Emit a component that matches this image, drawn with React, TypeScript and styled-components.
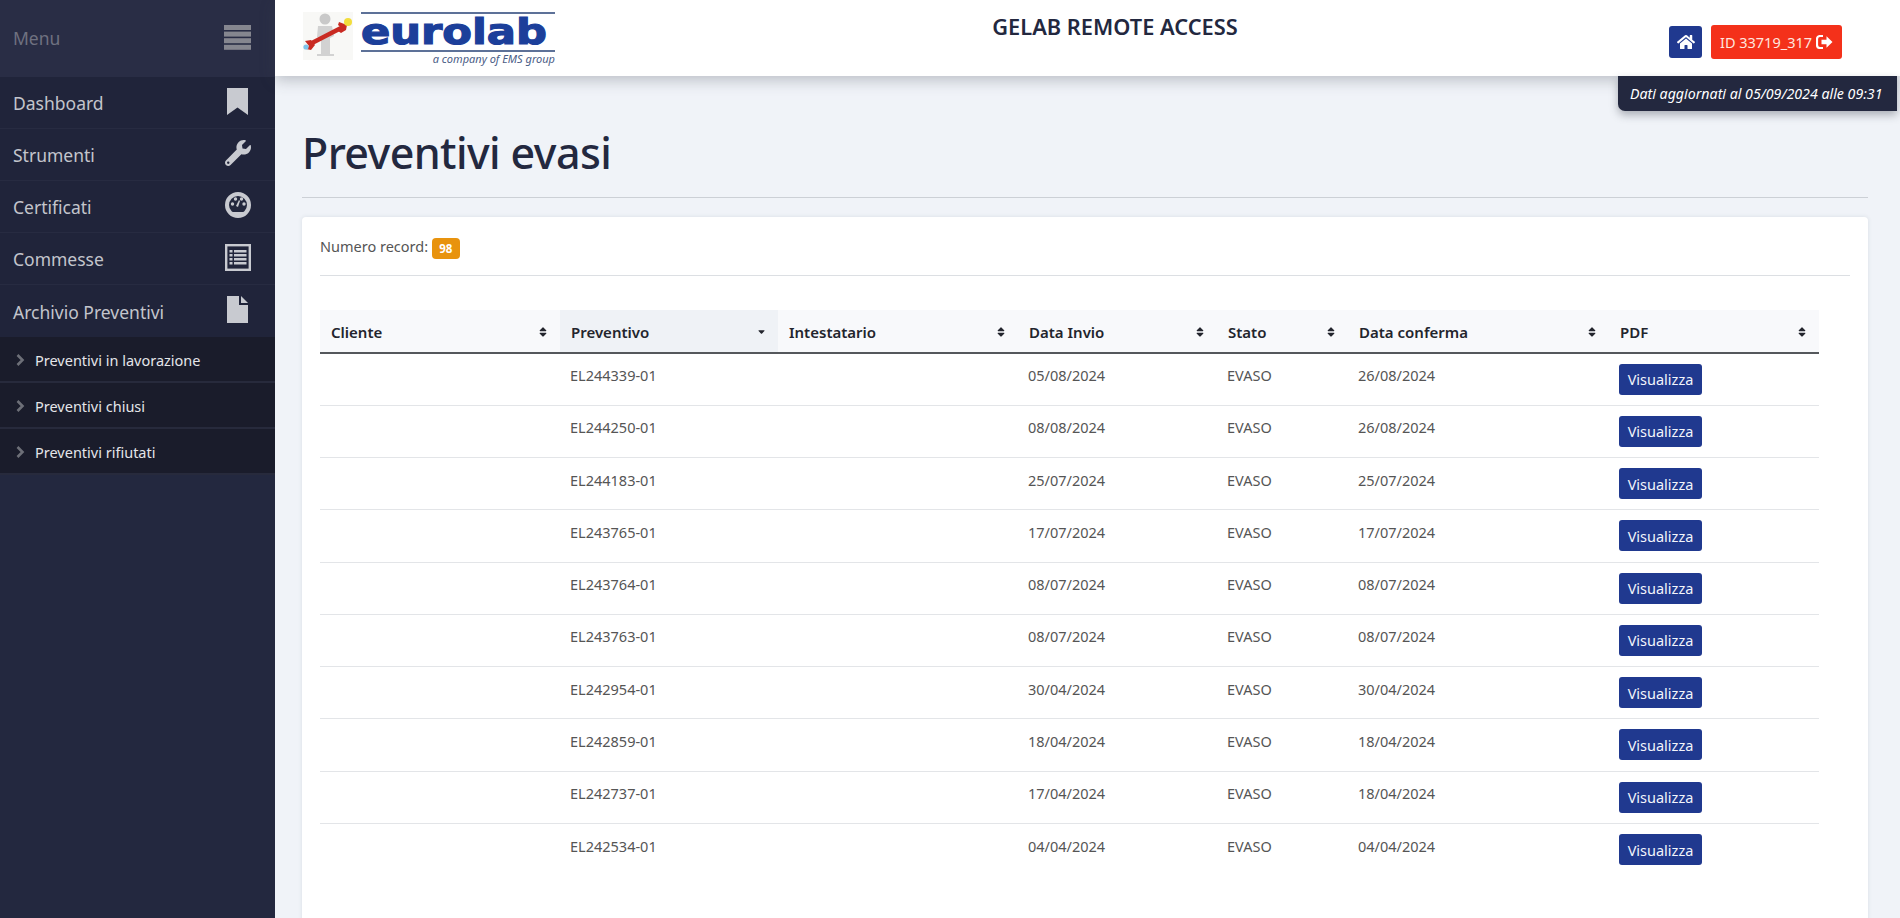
import styled, { createGlobalStyle } from "styled-components";
import { FaWrench, FaHome, FaSortDown, FaSort } from "react-icons/fa";

const GlobalStyle = createGlobalStyle`
  html, body {
    margin: 0;
    height: 100%;
    overflow: hidden;
    background: #f0f3f8;
    font-family: "Noto Sans", "Open Sans", sans-serif;
  }
  * { box-sizing: border-box; }
`;

const MenuIcon = () => (
  <svg width="27" height="25" viewBox="0 0 27 25" fill="#85868f">
    <rect y="0" width="27" height="5" />
    <rect y="6.6" width="27" height="5" />
    <rect y="13.2" width="27" height="5" />
    <rect y="19.8" width="27" height="5" />
  </svg>
);

const BookmarkIcon = () => (
  <svg width="21" height="27" viewBox="0 0 21 27" fill="#c8cad0">
    <path d="M0 0h21v27l-10.5-7.5L0 27z" />
  </svg>
);

const GaugeIcon = () => (
  <svg width="26" height="26" viewBox="0 0 26 26">
    <circle cx="13" cy="13" r="11" fill="#22273d" stroke="#c8cad0" strokeWidth="4" />
    <circle cx="7.5" cy="12" r="1.7" fill="#c8cad0" />
    <circle cx="10.5" cy="7" r="1.7" fill="#c8cad0" />
    <circle cx="16.5" cy="7" r="1.7" fill="#c8cad0" />
    <circle cx="19" cy="12" r="1.7" fill="#c8cad0" />
    <path d="M11 14l3-6 1 1-2 6z" fill="#c8cad0" />
    <path d="M6 20h14v3H6z" fill="#c8cad0" />
  </svg>
);

const ListIcon = () => (
  <svg width="26" height="27" viewBox="0 0 26 27">
    <rect x="1.2" y="1.2" width="23.6" height="24.6" fill="none" stroke="#c8cad0" strokeWidth="2.4" />
    <path d="M4.5 6h3v2.5h-3zM4.5 10h3v2.5h-3zM4.5 14h3v2.5h-3zM4.5 18h3v2.5h-3z" fill="#c8cad0" />
    <path d="M9 6h12.5v2.5H9zM9 10h12.5v2.5H9zM9 14h12.5v2.5H9zM9 18h12.5v2.5H9z" fill="#c8cad0" />
  </svg>
);

const FileIcon = () => (
  <svg width="21" height="27" viewBox="0 0 21 27" fill="#c8cad0">
    <path d="M0 0h12v9h9v18H0z" />
    <path d="M14 0l7 7h-7z" />
  </svg>
);

const ChevronIcon = () => (
  <svg width="9" height="12" viewBox="0 0 9 12">
    <path d="M1.5 1l5 5-5 5" fill="none" stroke="#6d6f78" strokeWidth="2.6" />
  </svg>
);

const LogoutIcon = () => (
  <svg width="17" height="14" viewBox="0 0 17 14">
    <path d="M7 1H4a3 3 0 0 0-3 3v6a3 3 0 0 0 3 3h3" fill="none" stroke="#fff" strokeWidth="2.2" />
    <path d="M5.5 4.8h5V1.2l6 5.8-6 5.8V9.2h-5z" fill="#fff" />
  </svg>
);

const LogoFigure = () => (
  <svg width="50" height="48" viewBox="0 0 50 48">
    <rect width="50" height="48" fill="#f8f8f6" />
    <circle cx="22" cy="7" r="5.5" fill="#c9c9c9" />
    <path d="M15 14h14l2 10-4 2v16h4v2H14v-2h4V27l-4-2z" fill="#d2d2d2" />
    <path d="M7 32L40 15" stroke="#c92a22" strokeWidth="4.5" />
    <path d="M36 10l8 3-1 5-5 3-3-2 4-3-4-3zM2 29l6-1 4 5-4 5-5-1 3-3z" fill="#c92a22" />
    <circle cx="45" cy="10" r="4" fill="#f2dd3c" />
    <circle cx="3" cy="35" r="2.6" fill="#7fc3ea" />
  </svg>
);

const rows = [
  ["EL244339-01", "05/08/2024", "26/08/2024"],
  ["EL244250-01", "08/08/2024", "26/08/2024"],
  ["EL244183-01", "25/07/2024", "25/07/2024"],
  ["EL243765-01", "17/07/2024", "17/07/2024"],
  ["EL243764-01", "08/07/2024", "08/07/2024"],
  ["EL243763-01", "08/07/2024", "08/07/2024"],
  ["EL242954-01", "30/04/2024", "30/04/2024"],
  ["EL242859-01", "18/04/2024", "18/04/2024"],
  ["EL242737-01", "17/04/2024", "18/04/2024"],
  ["EL242534-01", "04/04/2024", "04/04/2024"],
];

const columns = [
  { label: "Cliente", width: 240 },
  { label: "Preventivo", width: 218, active: true },
  { label: "Intestatario", width: 240 },
  { label: "Data Invio", width: 199 },
  { label: "Stato", width: 131 },
  { label: "Data conferma", width: 261 },
  { label: "PDF", width: 210 },
];

const App = () => {
  return (
    <Page>
      <GlobalStyle />
      <Sidebar>
        <MenuHead>
          <span>Menu</span>
          <MenuIcon />
        </MenuHead>
        <NavItem>
          Dashboard
          <NavIcon><BookmarkIcon /></NavIcon>
        </NavItem>
        <NavItem>
          Strumenti
          <NavIcon><FaWrench size={26} /></NavIcon>
        </NavItem>
        <NavItem>
          Certificati
          <NavIcon><GaugeIcon /></NavIcon>
        </NavItem>
        <NavItem>
          Commesse
          <NavIcon><ListIcon /></NavIcon>
        </NavItem>
        <NavItem $last>
          Archivio Preventivi
          <NavIcon><FileIcon /></NavIcon>
        </NavItem>
        {["Preventivi in lavorazione", "Preventivi chiusi", "Preventivi rifiutati"].map((t) => (
          <SubItem key={t}>
            <ChevronIcon />
            {t}
          </SubItem>
        ))}
      </Sidebar>

      <Main>
        <Header>
          <Logo>
            <LogoFigure />
            <LogoText>
              <LogoName><LogoWord>eurolab</LogoWord></LogoName>
              <LogoTag>a company of EMS group</LogoTag>
            </LogoText>
          </Logo>
          <HeaderTitle>GELAB REMOTE ACCESS</HeaderTitle>
          <HeaderButtons>
            <HomeButton><FaHome size={18} color="#fff" /></HomeButton>
            <IdButton>ID 33719_317 <LogoutIcon /></IdButton>
          </HeaderButtons>
          <UpdatedNote>Dati aggiornati al 05/09/2024 alle 09:31</UpdatedNote>
        </Header>

        <Content>
          <Title>Preventivi evasi</Title>
          <Card>
            <RecordLine>
              Numero record: <Badge>98</Badge>
            </RecordLine>
            <Table>
              <thead>
                <tr>
                  {columns.map((c) => (
                    <HeadCell key={c.label} $active={c.active} style={{ width: c.width }}>
                      <HeadInner>
                        {c.label}
                        {c.active ? (
                          <ActiveSort><FaSortDown size={11} /></ActiveSort>
                        ) : (
                          <FaSort size={12} />
                        )}
                      </HeadInner>
                    </HeadCell>
                  ))}
                </tr>
              </thead>
              <tbody>
                {rows.map((r) => (
                  <tr key={r[0]}>
                    <Cell />
                    <Cell>{r[0]}</Cell>
                    <Cell />
                    <Cell>{r[1]}</Cell>
                    <Cell>EVASO</Cell>
                    <Cell>{r[2]}</Cell>
                    <ButtonCell>
                      <ViewButton>Visualizza</ViewButton>
                    </ButtonCell>
                  </tr>
                ))}
              </tbody>
            </Table>
          </Card>
        </Content>
      </Main>
    </Page>
  );
};

export default App;

const Page = styled.div`
  display: flex;
  width: 1900px;
  height: 918px;
  overflow: hidden;
`;

const Sidebar = styled.aside`
  width: 275px;
  flex-shrink: 0;
  background: #23283f;
`;

const MenuHead = styled.div`
  height: 77px;
  padding: 0 24px 2px 13px;
  display: flex;
  align-items: center;
  justify-content: space-between;
  font-size: 17.5px;
  color: #6f7180;
  background: #292d45;
`;

const NavItem = styled.div<{ $last?: boolean }>`
  height: 52px;
  padding: 1px 24px 0 13px;
  display: flex;
  align-items: center;
  justify-content: space-between;
  font-size: 17.5px;
  color: #c3c5cc;
  background: #20243a;
  border-bottom: ${(p) => (p.$last ? "0" : "1px solid #272b41")};
`;

const NavIcon = styled.span`
  width: 27px;
  display: flex;
  justify-content: center;
  margin-top: -4px;
  color: #c8cad0;
`;

const SubItem = styled.div`
  height: 46px;
  padding: 2px 0 0 16px;
  display: flex;
  align-items: center;
  gap: 10px;
  font-size: 14.5px;
  color: #e4e5e9;
  background: #1a1c2b;
  border-bottom: 2px solid #272a3c;
`;

const Main = styled.div`
  flex: 1;
  min-width: 0;
`;

const Header = styled.header`
  position: relative;
  height: 76px;
  padding: 12px 58px 0 28px;
  display: flex;
  align-items: flex-start;
  justify-content: space-between;
  background: #fff;
  box-shadow: 0 4px 14px rgba(60, 65, 80, 0.3);
`;

const Logo = styled.div`
  display: flex;
  gap: 8px;
  width: 252px;
`;

const LogoText = styled.div`
  flex: 1;
  min-width: 0;
  border-top: 2px solid #5d7198;
`;

const LogoName = styled.div`
  height: 38px;
  border-bottom: 2px solid #5d7198;
`;

const LogoWord = styled.span`
  display: block;
  height: 35px;
  overflow: hidden;
  font-family: "DejaVu Sans", sans-serif;
  font-weight: 700;
  font-size: 36px;
  line-height: 35px;
  color: #1c3f9a;
  -webkit-text-stroke: 1.2px #1c3f9a;
  transform: scaleX(1.2);
  transform-origin: left top;
`;

const LogoTag = styled.div`
  text-align: right;
  font-style: italic;
  font-size: 11px;
  line-height: 14px;
  color: #4a5c86;
`;

const HeaderTitle = styled.h1`
  margin: 0 0 0 6px;
  font-size: 21.8px;
  line-height: 29px;
  font-weight: 600;
  color: #23283f;
`;

const HeaderButtons = styled.div`
  display: flex;
  align-items: center;
  gap: 9px;
  margin-top: 13px;
`;

const HomeButton = styled.button`
  width: 33px;
  height: 32px;
  padding: 0;
  display: flex;
  align-items: center;
  justify-content: center;
  border: 0;
  border-radius: 3px;
  background: #20398f;
`;

const IdButton = styled.button`
  height: 34px;
  width: 131px;
  padding: 0;
  display: flex;
  align-items: center;
  justify-content: center;
  gap: 4px;
  border: 0;
  border-radius: 3px;
  font: inherit;
  font-size: 14.5px;
  color: #ffe6df;
  background: #f4311a;
`;

const UpdatedNote = styled.div`
  position: absolute;
  top: 76px;
  right: 3px;
  width: 279px;
  height: 35px;
  padding-left: 12px;
  display: flex;
  align-items: center;
  font-style: italic;
  font-size: 14.2px;
  color: #fff;
  background: #23283f;
  border-radius: 0 0 0 7px;
  box-shadow: 0 4px 8px rgba(40, 45, 60, 0.35);
`;

const Content = styled.main`
  padding: 0 32px 0 27px;
`;

const Title = styled.h2`
  margin: 0;
  height: 122px;
  padding-top: 47px;
  font-size: 43px;
  line-height: 60px;
  letter-spacing: -0.6px;
  font-weight: 500;
  color: #23283f;
  border-bottom: 1px solid #ccd0d6;
`;

const Card = styled.section`
  margin-top: 19px;
  height: 800px;
  padding: 0 18px;
  background: #fff;
  border-radius: 4px;
  box-shadow: 0 0 4px rgba(60, 70, 90, 0.12);
`;

const RecordLine = styled.div`
  height: 59px;
  padding-top: 19px;
  font-size: 14.5px;
  color: #555;
  border-bottom: 1px solid #dcdfe3;
`;

const Badge = styled.span`
  display: inline-block;
  width: 28px;
  height: 21px;
  text-align: center;
  vertical-align: -1px;
  font-size: 11.5px;
  font-weight: 700;
  line-height: 21px;
  color: #fff;
  background: #e8930e;
  border-radius: 4px;
`;

const Table = styled.table`
  width: 1499px;
  margin-top: 34px;
  border-collapse: collapse;
  table-layout: fixed;
`;

const HeadCell = styled.th<{ $active?: boolean }>`
  height: 43px;
  padding: 1px 11px 0 11px;
  text-align: left;
  font-size: 15px;
  font-weight: 600;
  color: #23252d;
  background: ${(p) => (p.$active ? "#eff2f6" : "#f8f9fb")};
  border-bottom: 2px solid #55585c;
`;

const HeadInner = styled.div`
  display: flex;
  align-items: center;
  justify-content: space-between;
`;

const ActiveSort = styled.span`
  display: flex;
  margin-top: -5px;
`;

const Cell = styled.td`
  height: 52.25px;
  padding: 0 10px 8px;
  font-size: 14.5px;
  color: #555;
  border-bottom: 1px solid #e3e5e8;
  tr:last-child > & {
    border-bottom: 0;
  }
`;

const ButtonCell = styled(Cell)`
  padding: 0 10px;
`;

const ViewButton = styled.button`
  width: 83px;
  height: 31px;
  padding: 0;
  border: 0;
  border-radius: 3px;
  font: inherit;
  font-size: 14.5px;
  color: #f2f5fb;
  background: #20398f;
`;
